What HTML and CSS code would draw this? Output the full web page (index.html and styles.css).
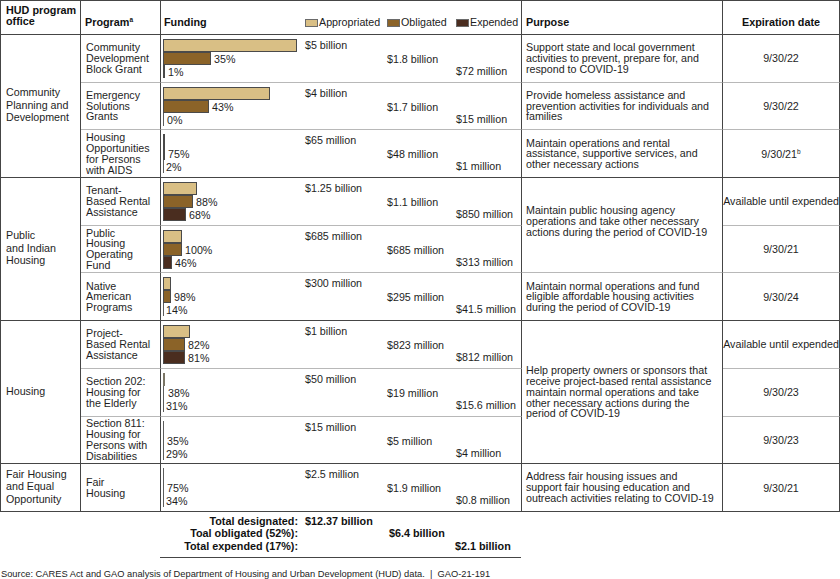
FILE: index.html
```html
<!DOCTYPE html>
<html lang="en">
<head>
<meta charset="utf-8">
<title>HUD CARES Act funding</title>
<link rel="stylesheet" href="styles.css">
</head>
<body>
<div class="tbl">
  <!-- header -->
  <div class="cell h c1 hoff"><span>HUD program<br>office</span></div>
  <div class="cell h c2"><span>Program<sup>a</sup></span></div>
  <div class="cell h c3 hfund">
    <div class="fg hg">
      <span class="hf">Funding</span>
      <span class="lg"><i class="sw ap"></i>Appropriated</span>
      <span class="lg"><i class="sw ob"></i>Obligated</span>
      <span class="lg"><i class="sw ex"></i>Expended</span>
    </div>
  </div>
  <div class="cell h c4"><span>Purpose</span></div>
  <div class="cell h c5 hexp"><span>Expiration date</span></div>

  <!-- CDBG -->
  <div class="cell c1 office s3"><span>Community<br>Planning and<br>Development</span></div>
  <div class="cell c2 prog lt"><span>Community<br>Development<br>Block Grant</span></div>
  <div class="cell c3 fund lt"><div class="fg">
    <div class="br r1"><i class="bar ap" style="width:134px"></i></div>
    <div class="br r2"><i class="bar ob" style="width:48px"></i><span class="pct">35%</span></div>
    <div class="br r3"><i class="bar ex" style="width:2px"></i><span class="pct">1%</span></div>
    <span class="amt a1">$5 billion</span><span class="amt a2">$1.8 billion</span><span class="amt a3">$72 million</span>
  </div></div>
  <div class="cell c4 purp lt"><span>Support state and local government<br>activities to prevent, prepare for, and<br>respond to COVID-19</span></div>
  <div class="cell c5 exp lt"><span>9/30/22</span></div>

  <!-- ESG -->
  <div class="cell c2 prog lt"><span>Emergency<br>Solutions<br>Grants</span></div>
  <div class="cell c3 fund lt"><div class="fg">
    <div class="br r1"><i class="bar ap" style="width:107px"></i></div>
    <div class="br r2"><i class="bar ob" style="width:46px"></i><span class="pct">43%</span></div>
    <div class="br r3"><i class="bar thin"></i><span class="pct">0%</span></div>
    <span class="amt a1">$4 billion</span><span class="amt a2">$1.7 billion</span><span class="amt a3">$15 million</span>
  </div></div>
  <div class="cell c4 purp lt"><span>Provide homeless assistance and<br>prevention activities for individuals and<br>families</span></div>
  <div class="cell c5 exp lt"><span>9/30/22</span></div>

  <!-- HOPWA -->
  <div class="cell c2 prog"><span>Housing<br>Opportunities<br>for Persons<br>with AIDS</span></div>
  <div class="cell c3 fund"><div class="fg">
    <div class="br r1"><i class="bar ap" style="width:2px"></i></div>
    <div class="br r2"><i class="bar ob" style="width:2px"></i><span class="pct">75%</span></div>
    <div class="br r3"><i class="bar thin"></i><span class="pct tight">2%</span></div>
    <span class="amt a1">$65 million</span><span class="amt a2">$48 million</span><span class="amt a3">$1 million</span>
  </div></div>
  <div class="cell c4 purp"><span>Maintain operations and rental<br>assistance, supportive services, and<br>other necessary actions</span></div>
  <div class="cell c5 exp"><span>9/30/21<sup>b</sup></span></div>

  <!-- TBRA -->
  <div class="cell c1 office s3"><span>Public<br>and Indian<br>Housing</span></div>
  <div class="cell c2 prog lt"><span>Tenant-<br>Based Rental<br>Assistance</span></div>
  <div class="cell c3 fund lt"><div class="fg">
    <div class="br r1"><i class="bar ap" style="width:34px"></i></div>
    <div class="br r2"><i class="bar ob" style="width:30px"></i><span class="pct">88%</span></div>
    <div class="br r3"><i class="bar ex" style="width:23px"></i><span class="pct">68%</span></div>
    <span class="amt a1">$1.25 billion</span><span class="amt a2">$1.1 billion</span><span class="amt a3">$850 million</span>
  </div></div>
  <div class="cell c4 purp lt s2 up"><span>Maintain public housing agency<br>operations and take other necessary<br>actions during the period of COVID-19</span></div>
  <div class="cell c5 exp lt"><span>Available until expended</span></div>

  <!-- PHOF -->
  <div class="cell c2 prog lt"><span>Public<br>Housing<br>Operating<br>Fund</span></div>
  <div class="cell c3 fund lt"><div class="fg">
    <div class="br r1"><i class="bar ap" style="width:19px"></i></div>
    <div class="br r2"><i class="bar ob" style="width:19px"></i><span class="pct">100%</span></div>
    <div class="br r3"><i class="bar ex" style="width:9px"></i><span class="pct">46%</span></div>
    <span class="amt a1">$685 million</span><span class="amt a2">$685 million</span><span class="amt a3">$313 million</span>
  </div></div>
  <div class="cell c5 exp lt"><span>9/30/21</span></div>

  <!-- NAP -->
  <div class="cell c2 prog"><span>Native<br>American<br>Programs</span></div>
  <div class="cell c3 fund"><div class="fg">
    <div class="br r1"><i class="bar ap" style="width:8px"></i></div>
    <div class="br r2"><i class="bar ob" style="width:8px"></i><span class="pct">98%</span></div>
    <div class="br r3"><i class="bar thin"></i><span class="pct tight">14%</span></div>
    <span class="amt a1">$300 million</span><span class="amt a2">$295 million</span><span class="amt a3">$41.5 million</span>
  </div></div>
  <div class="cell c4 purp"><span>Maintain normal operations and fund<br>eligible affordable housing activities<br>during the period of COVID-19</span></div>
  <div class="cell c5 exp"><span>9/30/24</span></div>

  <!-- PBRA -->
  <div class="cell c1 office s3"><span>Housing</span></div>
  <div class="cell c2 prog lt"><span>Project-<br>Based Rental<br>Assistance</span></div>
  <div class="cell c3 fund lt"><div class="fg">
    <div class="br r1"><i class="bar ap" style="width:27px"></i></div>
    <div class="br r2"><i class="bar ob" style="width:22px"></i><span class="pct">82%</span></div>
    <div class="br r3"><i class="bar ex" style="width:22px"></i><span class="pct">81%</span></div>
    <span class="amt a1">$1 billion</span><span class="amt a2">$823 million</span><span class="amt a3">$812 million</span>
  </div></div>
  <div class="cell c4 purp s3"><span>Help property owners or sponsors that<br>receive project-based rental assistance<br>maintain normal operations and take<br>other necessary actions during the<br>period of COVID-19</span></div>
  <div class="cell c5 exp lt"><span>Available until expended</span></div>

  <!-- S202 -->
  <div class="cell c2 prog lt"><span>Section 202:<br>Housing for<br>the Elderly</span></div>
  <div class="cell c3 fund lt"><div class="fg">
    <div class="br r1"><i class="bar ap tiny" style="width:2px"></i></div>
    <div class="br r2"><i class="bar thin"></i><span class="pct wide">38%</span></div>
    <div class="br r3"><i class="bar thin"></i><span class="pct tight">31%</span></div>
    <span class="amt a1">$50 million</span><span class="amt a2">$19 million</span><span class="amt a3">$15.6 million</span>
  </div></div>
  <div class="cell c5 exp lt"><span>9/30/23</span></div>

  <!-- S811 -->
  <div class="cell c2 prog"><span>Section 811:<br>Housing for<br>Persons with<br>Disabilities</span></div>
  <div class="cell c3 fund"><div class="fg">
    <div class="br r1"><i class="bar thin"></i></div>
    <div class="br r2"><i class="bar thin"></i><span class="pct">35%</span></div>
    <div class="br r3"><i class="bar thin"></i><span class="pct tight">29%</span></div>
    <span class="amt a1">$15 million</span><span class="amt a2">$5 million</span><span class="amt a3">$4 million</span>
  </div></div>
  <div class="cell c5 exp"><span>9/30/23</span></div>

  <!-- Fair Housing -->
  <div class="cell c1 office"><span>Fair Housing<br>and Equal<br>Opportunity</span></div>
  <div class="cell c2 prog"><span>Fair<br>Housing</span></div>
  <div class="cell c3 fund"><div class="fg">
    <div class="br r1"><i class="bar thin"></i></div>
    <div class="br r2"><i class="bar thin"></i><span class="pct">75%</span></div>
    <div class="br r3"><i class="bar thin"></i><span class="pct tight">34%</span></div>
    <span class="amt a1">$2.5 million</span><span class="amt a2">$1.9 million</span><span class="amt a3">$0.8 million</span>
  </div></div>
  <div class="cell c4 purp"><span>Address fair housing issues and<br>support fair housing education and<br>outreach activities relating to COVID-19</span></div>
  <div class="cell c5 exp"><span>9/30/21</span></div>
</div>

<div class="tot">
  <span class="tl">Total designated:</span><span class="tv1">$12.37 billion</span>
  <span class="tl">Toal obligated (52%):</span><span class="tv2">$6.4 billion</span>
  <span class="tl">Total expended (17%):</span><span class="tv3">$2.1 billion</span>
</div>
<div class="rule"></div>
<p class="src">Source: CARES Act and GAO analysis of Department of Housing and Urban Development (HUD) data.&nbsp; |&nbsp; GAO-21-191</p>
</body>
</html>
```

FILE: styles.css
```css
html, body {
  margin: 0;
  padding: 0;
  background: #ffffff;
}

body {
  font-family: "Liberation Sans", Arial, sans-serif;
  font-size: 10.7px;
  color: #1e1e1e;
  width: 840px;
}

.tbl {
  display: grid;
  grid-template-columns: 80px 80px 361px 201px 117px;
  grid-template-rows: 34px repeat(10, 47.7px);
  border-top: 1px solid #454545;
  border-left: 1px solid #454545;
  width: 840px;
  box-sizing: border-box;
}

.cell {
  box-sizing: border-box;
  border-right: 1px solid #454545;
  border-bottom: 1px solid #454545;
  min-width: 0;
  overflow: visible;
}

.lt { border-bottom-color: #b8b8b8; }

.c1 { grid-column: 1; }
.c2 { grid-column: 2; }
.c3 { grid-column: 3; }
.c4 { grid-column: 4; }
.c5 { grid-column: 5; }
.s2 { grid-row: span 2; }
.s3 { grid-row: span 3; }

/* header */
.h {
  font-weight: bold;
  font-size: 10.8px;
  line-height: 11px;
  display: flex;
  align-items: flex-end;
  padding: 0 2px 6px 4px;
  color: #111;
  white-space: nowrap;
}
.hoff { padding-left: 5px; padding-bottom: 7px; }
.hexp { justify-content: center; padding: 0 0 6px 0; }

sup {
  font-size: 6.5px;
  line-height: 0;
  vertical-align: 4px;
  font-weight: bold;
}
.exp sup { font-weight: normal; }

/* body cells */
.office {
  display: flex;
  align-items: center;
  padding: 0 3px 2px 5px;
  line-height: 12.5px;
}
.prog {
  display: flex;
  align-items: center;
  padding: 0 3px 0 5px;
  line-height: 10.8px;
}
.purp {
  display: flex;
  align-items: center;
  padding: 0 3px 0 4px;
  line-height: 10.8px;
  white-space: nowrap;
}
.purp.up { padding-bottom: 8px; }
.exp {
  display: flex;
  align-items: center;
  justify-content: center;
  text-align: center;
  white-space: nowrap;
}

/* funding */
.fund { padding: 4px 0 0 2px; }
.fg {
  display: grid;
  grid-template-columns: 142px 82px 69px 1fr;
  grid-template-rows: 13px 13px 13px;
}
.br {
  grid-column: 1;
  display: flex;
  align-items: center;
  height: 13px;
}
.r1 { grid-row: 1; }
.r2 { grid-row: 2; }
.r3 { grid-row: 3; }
.bar {
  display: block;
  flex: none;
  height: 13px;
  box-sizing: border-box;
  border: 1px solid #4a4a4a;
}
.bar.thin {
  width: 1px;
  border: none;
  background: #5c5c5c;
}
.bar.tiny { border-color: #7a7565; }
.ap { background: #d9bf85; }
.ob { background: #8b6328; }
.ex { background: #4a2d1f; }

/* funding header (legend) */
.cell.hfund { padding: 0 0 6px 2px; }
.hfund .fg.hg {
  width: 100%;
  grid-template-rows: auto;
  align-items: end;
}
.hf { grid-column: 1; padding-left: 1px; }
.lg {
  display: flex;
  align-items: center;
  font-weight: normal;
  font-size: 10.7px;
  color: #222;
  white-space: nowrap;
}
.sw {
  display: block;
  width: 13px;
  height: 8px;
  box-sizing: border-box;
  border: 1px solid #6a6a6a;
  margin-right: 1px;
}

.pct {
  margin-left: 3px;
  padding-top: 2px;
  line-height: 13px;
  white-space: nowrap;
}
.pct.wide { margin-left: 4px; }
.pct.tight { margin-left: 2px; }

.amt {
  line-height: 13px;
  white-space: nowrap;
}
.a1 { grid-column: 2; grid-row: 1; }
.a2 { grid-column: 3; grid-row: 2; padding-top: 1px; }
.a3 { grid-column: 4; grid-row: 3; }

/* totals */
.tot {
  display: grid;
  grid-template-columns: 305px 84px 66px 1fr;
  font-weight: bold;
  font-size: 10.8px;
  line-height: 12.5px;
  padding-top: 3px;
  color: #111;
}
.tl {
  grid-column: 1;
  text-align: right;
  padding-right: 7px;
}
.tv1 { grid-column: 2; white-space: nowrap; }
.tv2 { grid-column: 3; white-space: nowrap; }
.tv3 { grid-column: 4; white-space: nowrap; }

.rule {
  margin: 5px 0 0 160px;
  width: 361px;
  border-top: 1px solid #454545;
}

.src {
  margin: 0;
  padding: 10px 0 0 1px;
  font-size: 9.3px;
  line-height: 12px;
  color: #222;
  white-space: nowrap;
}
```
